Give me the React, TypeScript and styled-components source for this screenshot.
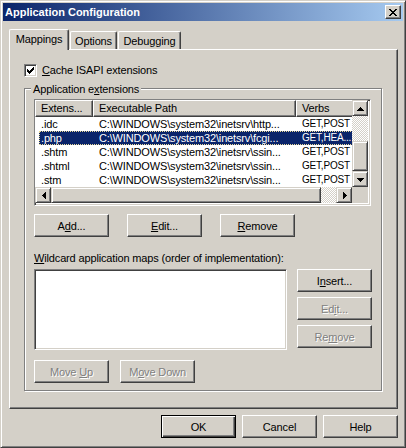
import React from 'react';
import styled, { createGlobalStyle, css } from 'styled-components';

const FACE = '#d4d0c8';
const SHADOW = '#808080';
const DARK = '#404040';
const SELECT = '#0a246a';

const GlobalStyle = createGlobalStyle`
  html, body {
    margin: 0;
    padding: 0;
    background: ${FACE};
  }
  body {
    font-family: "Liberation Sans", Arial, sans-serif;
    font-size: 11px;
    letter-spacing: -0.15px;
    color: #000;
  }
  * {
    box-sizing: border-box;
  }
`;

const raised = css`
  border: 1px solid;
  border-color: #fff ${DARK} ${DARK} #fff;
  box-shadow: inset -1px -1px 0 ${SHADOW};
`;

const scrollRaised = css`
  border: 1px solid;
  border-color: ${FACE} ${DARK} ${DARK} ${FACE};
  box-shadow: inset 1px 1px 0 #fff, inset -1px -1px 0 ${SHADOW};
  background: ${FACE};
`;

const sunken = css`
  border: 1px solid;
  border-color: ${SHADOW} #fff #fff ${SHADOW};
  box-shadow: inset 1px 1px 0 ${DARK}, inset -1px -1px 0 ${FACE};
  background: #fff;
`;

const Window = styled.div`
  width: 406px;
  height: 448px;
  background: ${FACE};
  border: 1px solid;
  border-color: ${FACE} ${DARK} ${DARK} ${FACE};
  box-shadow: inset 1px 1px 0 #fff, inset -1px -1px 0 ${SHADOW};
  padding: 2px;
  display: flex;
  flex-direction: column;
`;

const TitleBar = styled.div`
  height: 18px;
  display: flex;
  align-items: center;
  justify-content: space-between;
  padding: 0 2px;
  background: linear-gradient(to right, #0a246a, #a6caf0);
  color: #fff;
  font-weight: bold;
  font-size: 11px;
  letter-spacing: 0;
`;

const CloseButton = styled.div`
  width: 16px;
  height: 14px;
  ${raised};
  background: ${FACE};
  display: flex;
  align-items: center;
  justify-content: center;
`;

const Body = styled.div`
  padding: 8px 5px 0 6px;
  display: flex;
  flex-direction: column;
`;

const TabStrip = styled.div`
  display: flex;
  align-items: flex-end;
  height: 20px;
`;

const Tab = styled.div<{ $active?: boolean; $w: number }>`
  width: ${({ $w }) => $w}px;
  height: ${({ $active }) => ($active ? 21 : 18)}px;
  margin-bottom: ${({ $active }) => ($active ? -1 : 0)}px;
  margin-right: 1px;
  padding-top: 3px;
  line-height: 13px;
  text-align: center;
  background: ${FACE};
  border-left: 1px solid #fff;
  border-top: 1px solid #fff;
  border-right: 1px solid ${DARK};
  border-radius: 2px 2px 0 0;
  box-shadow: inset -1px 0 0 ${SHADOW};
  position: relative;
  z-index: ${({ $active }) => ($active ? 1 : 0)};
`;

const Panel = styled.div`
  width: 389px;
  height: 360px;
  ${raised};
  padding: 14px 13px 0 14px;
  display: flex;
  flex-direction: column;
`;

const CheckRow = styled.label`
  display: flex;
  align-items: center;
  gap: 5px;
  height: 13px;
  line-height: 13px;
`;

const CheckBox = styled.span`
  width: 13px;
  height: 13px;
  ${sunken};
  display: flex;
  align-items: center;
  justify-content: center;
`;

const GroupBox = styled.fieldset`
  margin: 4px 0 0 0;
  padding: 3px 9px 7px 9px;
  width: 358px;
  min-width: 0;
  border: 1px solid ${SHADOW};
  box-shadow: inset 1px 1px 0 #fff, 1px 1px 0 #fff;
`;

const Legend = styled.legend`
  padding: 2px 2px 0 2px;
  margin-left: -3px;
  line-height: 13px;
  background: ${FACE};
`;

const ListView = styled.div`
  width: 337px;
  height: 107px;
  ${sunken};
  display: grid;
  grid-template-columns: 317px 16px;
  grid-template-rows: 87px 16px;
`;

const ListContent = styled.div`
  overflow: hidden;
  background: #fff;
`;

const HeaderRow = styled.div`
  display: flex;
  height: 17px;
  width: 400px;
`;

const HeaderCell = styled.div<{ $w: number }>`
  flex: none;
  width: ${({ $w }) => $w}px;
  height: 17px;
  ${raised};
  background: ${FACE};
  padding-left: 5px;
  line-height: 15px;
  white-space: nowrap;
  overflow: hidden;
`;

const Row = styled.div<{ $selected?: boolean }>`
  display: flex;
  height: 14px;
  width: 322px;
  margin-left: 4px;
  line-height: 14px;
  background: ${({ $selected }) => ($selected ? SELECT : 'transparent')};
  color: ${({ $selected }) => ($selected ? '#fff' : '#000')};
  outline: ${({ $selected }) => ($selected ? '1px dotted #e8d898' : 'none')};
  outline-offset: -1px;
`;

const Cell = styled.div<{ $w: number; $pad: number; $narrow?: boolean }>`
  flex: none;
  width: ${({ $w }) => $w}px;
  padding-left: ${({ $pad }) => $pad}px;
  white-space: nowrap;
  overflow: hidden;
  ${({ $narrow }) =>
    $narrow &&
    css`
      font-size: 10px;
      letter-spacing: -0.2px;
    `}
`;

const VScroll = styled.div`
  display: flex;
  flex-direction: column;
`;

const HScroll = styled.div`
  display: flex;
`;

const Corner = styled.div`
  background: ${FACE};
`;

const ArrowButton = styled.div`
  flex: none;
  width: 16px;
  height: 16px;
  ${scrollRaised};
  display: flex;
  align-items: center;
  justify-content: center;
`;

const Track = styled.div<{ $size: number }>`
  flex: none;
  flex-basis: ${({ $size }) => $size}px;
  background-color: #fff;
  background-image: repeating-conic-gradient(${FACE} 0% 25%, #fff 0% 50%);
  background-size: 2px 2px;
`;

const Thumb = styled.div<{ $size: number }>`
  flex: none;
  flex-basis: ${({ $size }) => $size}px;
  ${scrollRaised};
`;

const ButtonRow = styled.div<{ $gap: number; $top: number }>`
  display: flex;
  gap: ${({ $gap }) => $gap}px;
  margin-top: ${({ $top }) => $top}px;
`;

const Button = styled.button<{ $default?: boolean }>`
  width: 75px;
  height: 23px;
  padding: 0;
  font: inherit;
  letter-spacing: inherit;
  color: ${({ disabled }) => (disabled ? SHADOW : '#000')};
  text-shadow: ${({ disabled }) => (disabled ? '1px 1px 0 #fff' : 'none')};
  background: ${FACE};
  border: 1px solid;
  border-radius: 0;
  ${({ $default }) =>
    $default
      ? css`
          border-color: #000;
          box-shadow: inset 1px 1px 0 #fff, inset -1px -1px 0 ${DARK}, inset -2px -2px 0 ${SHADOW};
        `
      : css`
          border-color: #fff ${DARK} ${DARK} #fff;
          box-shadow: inset -1px -1px 0 ${SHADOW};
        `}
`;

const FieldLabel = styled.div`
  margin-top: 15px;
  line-height: 13px;
`;

const WildRow = styled.div`
  display: flex;
  gap: 10px;
  margin-top: 4px;
`;

const ListBox = styled.div`
  width: 254px;
  height: 81px;
  ${sunken};
`;

const SideButtons = styled.div`
  display: flex;
  flex-direction: column;
  gap: 5px;
`;

const Footer = styled.div`
  display: flex;
  justify-content: flex-end;
  gap: 6px;
  margin-top: 6px;
`;

type Dir = 'up' | 'down' | 'left' | 'right';

const Arrow = ({ dir }: { dir: Dir }) => {
  const turn = { up: 0, right: 90, down: 180, left: 270 }[dir];
  return (
    <svg width="7" height="7" viewBox="0 -1.5 7 7" shapeRendering="crispEdges" style={{ transform: `rotate(${turn}deg)` }}>
      <path d="M3 0h1v1h1v1h1v1h1v1H0V3h1V2h1V1h1z" fill="#000" />
    </svg>
  );
};

const CloseGlyph = () => (
  <svg width="8" height="7" viewBox="0 0 8 7" shapeRendering="crispEdges">
    <path
      d="M0 0h2v1H0zM6 0h2v1H6zM1 1h2v1H1zM5 1h2v1H5zM2 2h4v1H2zM3 3h2v1H3zM2 4h4v1H2zM1 5h2v1H1zM5 5h2v1H5zM0 6h2v1H0zM6 6h2v1H6z"
      fill="#000"
    />
  </svg>
);

const CheckMark = () => (
  <svg width="7" height="7" viewBox="0 0 7 7" shapeRendering="crispEdges">
    <path d="M0 2h1v3H0zM1 3h1v3H1zM2 4h1v3H2zM3 3h1v3H3zM4 2h1v3H4zM5 1h1v3H5zM6 0h1v3H6z" fill="#000" />
  </svg>
);

const extensions = [
  { ext: '.idc', path: 'C:\\WINDOWS\\system32\\inetsrv\\http...', verbs: 'GET,POST' },
  { ext: '.php', path: 'C:\\WINDOWS\\system32\\inetsrv\\fcgi...', verbs: 'GET,HEA...', selected: true },
  { ext: '.shtm', path: 'C:\\WINDOWS\\system32\\inetsrv\\ssin...', verbs: 'GET,POST' },
  { ext: '.shtml', path: 'C:\\WINDOWS\\system32\\inetsrv\\ssin...', verbs: 'GET,POST' },
  { ext: '.stm', path: 'C:\\WINDOWS\\system32\\inetsrv\\ssin...', verbs: 'GET,POST' },
];

export default function App() {
  return (
    <>
      <GlobalStyle />
      <Window>
        <TitleBar>
          <span>Application Configuration</span>
          <CloseButton>
            <CloseGlyph />
          </CloseButton>
        </TitleBar>
        <Body>
          <TabStrip>
            <Tab $active $w={60}>Mappings</Tab>
            <Tab $w={47}>Options</Tab>
            <Tab $w={63}>Debugging</Tab>
          </TabStrip>
          <Panel>
            <CheckRow>
              <CheckBox>
                <CheckMark />
              </CheckBox>
              <span>
                <u>C</u>ache ISAPI extensions
              </span>
            </CheckRow>
            <GroupBox>
              <Legend>
                Application e<u>x</u>tensions
              </Legend>
              <ListView>
                <ListContent>
                  <HeaderRow>
                    <HeaderCell $w={58}>Extens...</HeaderCell>
                    <HeaderCell $w={203}>Executable Path</HeaderCell>
                    <HeaderCell $w={70}>Verbs</HeaderCell>
                  </HeaderRow>
                  {extensions.map((item) => (
                    <Row key={item.ext} $selected={item.selected}>
                      <Cell $w={54} $pad={2}>{item.ext}</Cell>
                      <Cell $w={203} $pad={6}>{item.path}</Cell>
                      <Cell $w={65} $pad={6} $narrow>{item.verbs}</Cell>
                    </Row>
                  ))}
                </ListContent>
                <VScroll>
                  <ArrowButton>
                    <Arrow dir="up" />
                  </ArrowButton>
                  <Track $size={25} />
                  <Thumb $size={30} />
                  <ArrowButton>
                    <Arrow dir="down" />
                  </ArrowButton>
                </VScroll>
                <HScroll>
                  <ArrowButton>
                    <Arrow dir="left" />
                  </ArrowButton>
                  <Thumb $size={270} />
                  <Track $size={15} />
                  <ArrowButton>
                    <Arrow dir="right" />
                  </ArrowButton>
                </HScroll>
                <Corner />
              </ListView>
              <ButtonRow $gap={18} $top={8}>
                <Button>
                  A<u>d</u>d...
                </Button>
                <Button>
                  <u>E</u>dit...
                </Button>
                <Button>
                  <u>R</u>emove
                </Button>
              </ButtonRow>
              <FieldLabel>
                <u>W</u>ildcard application maps (order of implementation):
              </FieldLabel>
              <WildRow>
                <ListBox />
                <SideButtons>
                  <Button>
                    I<u>n</u>sert...
                  </Button>
                  <Button disabled>
                    Ed<u>i</u>t...
                  </Button>
                  <Button disabled>
                    Re<u>m</u>ove
                  </Button>
                </SideButtons>
              </WildRow>
              <ButtonRow $gap={11} $top={10}>
                <Button disabled>
                  Move <u>U</u>p
                </Button>
                <Button disabled>
                  M<u>o</u>ve Down
                </Button>
              </ButtonRow>
            </GroupBox>
          </Panel>
          <Footer>
            <Button $default>OK</Button>
            <Button>Cancel</Button>
            <Button>Help</Button>
          </Footer>
        </Body>
      </Window>
    </>
  );
}
